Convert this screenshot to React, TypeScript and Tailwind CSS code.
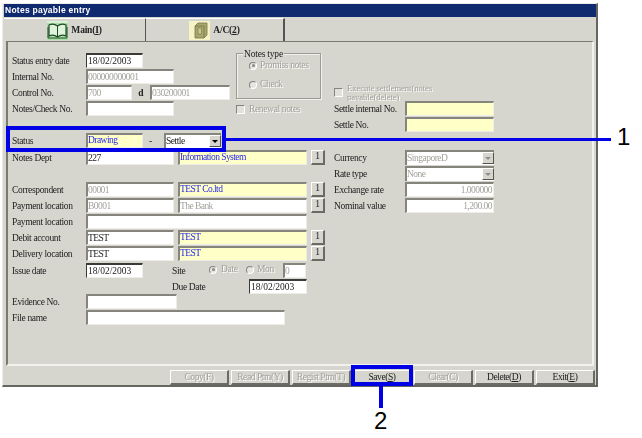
import React from "react";

type FieldKind = "plain" | "yellow" | "disabled" | "date";

function Field({ w, text = "", kind = "plain", blue = false, right = false, ml = "" }: { w: string; text?: string; kind?: FieldKind; blue?: boolean; right?: boolean; ml?: string }) {
  const bg = kind === "yellow" ? "bg-[#ffffc8]" : "bg-white";
  const border = kind === "date" ? "border-t-2 border-l border-[#3a3a36]" : "border-t-2 border-l-2 border-[#85847d]";
  const color = blue ? "text-[#2a2ae8]" : kind === "disabled" ? "text-[#a3a29c]" : "text-[#1c1c1c]";
  const track = kind === "date" ? "pl-px" : "tracking-[-0.55px]";
  const lead = blue ? "leading-[11px]" : "leading-[12px]";
  return (
    <div className={`${w} ${ml} ${bg} ${border} ${color} ${track} ${lead} ${right ? "text-right pr-px" : ""} h-[15px] shrink-0 border-b border-r border-b-[#eeede8] border-r-[#eeede8] overflow-hidden whitespace-nowrap`}>
      {text}
    </div>
  );
}

function Label({ children, w = "w-[74px]", off = false }: { children: React.ReactNode; w?: string; off?: boolean }) {
  return <div className={`${w} shrink-0 leading-[17px] tracking-[-0.35px] whitespace-nowrap ${off ? "text-[#a3a29c] [text-shadow:1px_1px_0_#fff]" : "text-[#222]"}`}>{children}</div>;
}

function Row({ children, h = "h-4" }: { children: React.ReactNode; h?: string }) {
  return <div className={`${h} flex items-start`}>{children}</div>;
}

function Picker() {
  return (
    <div className="w-[14px] h-[15px] ml-1 shrink-0 bg-[#d6d5ce] border-t border-l border-white border-r-2 border-b-2 border-r-[#6b6a64] border-b-[#6b6a64] text-center leading-[11px] text-[#222]">1</div>
  );
}

function Arrow({ off = false }: { off?: boolean }) {
  return (
    <div className="w-[12px] h-[12px] shrink-0 bg-[#d6d5ce] border-t border-l border-white border-r border-b border-r-[#55544f] border-b-[#55544f] flex items-center justify-center">
      <div className={`w-0 h-0 border-l-[3px] border-r-[3px] border-t-[3px] border-l-transparent border-r-transparent ${off ? "border-t-[#8f8e88]" : "border-t-black"}`} />
    </div>
  );
}

function Select({ w, text, off = false }: { w: string; text: string; off?: boolean }) {
  return (
    <div className={`${w} h-[15px] shrink-0 bg-white border-t-2 border-l-2 border-[#85847d] flex justify-between ${off ? "text-[#a3a29c]" : "text-[#1c1c1c]"}`}>
      <span className="tracking-[-0.5px] leading-[12px]">{text}</span>
      <Arrow off={off} />
    </div>
  );
}

function Radio({ on = false }: { on?: boolean }) {
  return (
    <div className="w-2 h-2 rounded-full bg-[#e6e5e0] border border-[#85847d] border-b-white border-r-white flex items-center justify-center shrink-0">
      {on && <div className="w-[3px] h-[3px] rounded-full bg-[#8a8983]" />}
    </div>
  );
}

function Check() {
  return <div className="w-[9px] h-[9px] shrink-0 bg-[#e2e1dc] border border-[#85847d] border-b-white border-r-white" />;
}

function Btn({ children, off = false }: { children: React.ReactNode; off?: boolean }) {
  return (
    <div className={`w-[59px] h-[15px] bg-[#d6d5ce] border-t border-l border-white border-r-2 border-b-2 border-r-[#6b6a64] border-b-[#6b6a64] text-center leading-[12px] tracking-[-0.45px] whitespace-nowrap ${off ? "text-[#a3a29c] [text-shadow:1px_1px_0_#fff]" : "text-[#1c1c1c]"}`}>
      {children}
    </div>
  );
}

function BookIcon() {
  return (
    <svg width="21" height="19" viewBox="0 0 21 19" className="shrink-0">
      <rect width="21" height="19" fill="#a9dfa6" />
      <rect x="0" y="0" width="21" height="2" fill="#d8f0d4" />
      <path d="M2 4 C5 2.5 8 3 10.5 5 C13 3 16 2.5 19 4 V15 C16 13.5 13 14 10.5 16 C8 14 5 13.5 2 15 Z" fill="#dff3da" stroke="#1f4a26" strokeWidth="1.2" />
      <path d="M10.5 5 V16" stroke="#1f4a26" strokeWidth="1" />
      <path d="M1 6 V17 H20 V6" fill="none" stroke="#1f4a26" strokeWidth="1" />
    </svg>
  );
}

function BinderIcon() {
  return (
    <svg width="21" height="19" viewBox="0 0 21 19" className="shrink-0">
      <rect width="21" height="19" fill="#f6f3c4" />
      <path d="M6 5 L9 2 H18 V14 L15 17 H6 Z" fill="#a8a66e" stroke="#77754a" strokeWidth="0.8" />
      <path d="M6 5 H15 V17" fill="none" stroke="#77754a" strokeWidth="0.8" />
      <rect x="9" y="7" width="3.5" height="6" fill="#c9c78e" stroke="#77754a" strokeWidth="0.6" />
    </svg>
  );
}

export default function App() {
  return (
    <div className="relative w-[642px] h-[438px] bg-white overflow-hidden font-['Liberation_Serif',serif] text-[9.5px]">
      <div className="ml-[2px] mt-[3px] w-[596px] h-[384px] flex flex-col bg-[#d6d5ce] blur-[0.3px] border-t border-l border-[#eeede8] border-r-2 border-b-2 border-r-[#66655f] border-b-[#66655f]">
        <div className="h-[13px] ml-px bg-[#102a70] text-white font-bold font-['Liberation_Sans',sans-serif] text-[8.5px] tracking-[0.25px] leading-[13px] pl-[1px] shrink-0">Notes payable entry</div>

        <div className="h-[24px] ml-px flex shrink-0 pt-px">
          <div className="w-[142px] border-t border-white border-r border-r-[#555] flex items-center justify-center gap-[3px] font-bold text-[9.5px] tracking-[-0.2px] text-[#222]">
            <BookIcon />
            <span>Main(<u>I</u>)</span>
          </div>
          <div className="w-[139px] border-t border-white border-r-2 border-r-[#555] flex items-center justify-center gap-[3px] font-bold text-[9.5px] tracking-[-0.2px] text-[#222]">
            <BinderIcon />
            <span>A/C(<u>2</u>)</span>
          </div>
        </div>

        <div className="h-[325px] ml-[3px] mr-[2px] flex shrink-0 pl-[4px] pt-[11px] border-t border-l-2 border-[#7a7972] border-r-2 border-b-2 border-r-[#f2f1ec] border-b-[#f2f1ec]">
          <div className="w-[322px] shrink-0">
            <div className="flex h-[80px]">
              <div className="w-[224px] shrink-0">
                <Row><Label>Status entry date</Label><Field w="w-[57px]" text="18/02/2003" kind="date" /></Row>
                <Row><Label>Internal No.</Label><Field w="w-[88px]" text="000000000001" kind="disabled" /></Row>
                <Row>
                  <Label>Control No.</Label>
                  <Field w="w-[46px]" text="700" kind="disabled" />
                  <div className="w-[18px] text-center leading-[16px] font-bold text-[#222] shrink-0">d</div>
                  <Field w="w-[80px]" text="030200001" kind="disabled" />
                </Row>
                <Row><Label>Notes/Check No.</Label><Field w="w-[88px]" /></Row>
              </div>
              <div className="w-[85px] shrink-0">
                <div className="relative h-[46px] border border-[#9c9b95] shadow-[1px_1px_0_#f2f1ec,inset_1px_1px_0_#f2f1ec] pl-3 pt-[4px]">
                  <div className="absolute left-[6px] -top-[5px] px-px bg-[#d6d5ce] leading-[10px] tracking-[-0.2px] text-[#222]">Notes type</div>
                  <div className="flex items-center gap-[3px] h-[15px]"><Radio on /><Label w="w-auto" off>Promiss notes</Label></div>
                  <div className="flex items-center gap-[3px] h-[15px] mt-[4px]"><Radio /><Label w="w-auto" off>Check</Label></div>
                </div>
                <div className="flex items-center gap-1 h-[15px] mt-[3px]"><Check /><Label w="w-auto" off>Renewal notes</Label></div>
              </div>
            </div>

            <Row h="h-[17px]">
              <Label>Status</Label>
              <Field w="w-[57px]" text="Drawing" kind="yellow" blue />
              <div className="w-[21px] pl-[6px] leading-[17px] text-[#222] shrink-0">-</div>
              <Select w="w-[57px]" text="Settle" />
            </Row>
            <Row>
              <Label>Notes Dept</Label>
              <Field w="w-[88px]" text="227" />
              <Field w="w-[129px]" ml="ml-1" text="Information System" kind="yellow" blue />
              <Picker />
            </Row>
            <Row><span /></Row>
            <Row>
              <Label>Correspondent</Label>
              <Field w="w-[88px]" text="00001" kind="disabled" />
              <Field w="w-[129px]" ml="ml-1" text="TEST Co.ltd" kind="yellow" blue />
              <Picker />
            </Row>
            <Row>
              <Label>Payment location</Label>
              <Field w="w-[88px]" text="B0001" kind="disabled" />
              <Field w="w-[129px]" ml="ml-1" text="The Bank" kind="disabled" />
              <Picker />
            </Row>
            <Row><Label>Payment location</Label><Field w="w-[221px]" /></Row>
            <Row>
              <Label>Debit account</Label>
              <Field w="w-[88px]" text="TEST" />
              <Field w="w-[129px]" ml="ml-1" text="TEST" kind="yellow" blue />
              <Picker />
            </Row>
            <Row h="h-[17px]">
              <Label>Delivery location</Label>
              <Field w="w-[88px]" text="TEST" />
              <Field w="w-[129px]" ml="ml-1" text="TEST" kind="yellow" blue />
              <Picker />
            </Row>
            <Row>
              <Label>Issue date</Label>
              <Field w="w-[57px]" text="18/02/2003" kind="date" />
              <Label w="w-[37px] ml-[29px]">Site</Label>
              <div className="flex items-center gap-1 h-[13px] w-[37px] shrink-0"><Radio on /><Label w="w-auto" off>Date</Label></div>
              <div className="flex items-center gap-[3px] h-[13px] w-[37px] shrink-0"><Radio /><Label w="w-auto" off>Mon</Label></div>
              <Field w="w-[23px]" text="0" kind="disabled" />
            </Row>
            <Row h="h-[15px]">
              <Label w="w-[77px] ml-[160px]">Due Date</Label>
              <Field w="w-[58px]" text="18/02/2003" kind="date" />
            </Row>
            <Row><Label>Evidence No.</Label><Field w="w-[91px]" /></Row>
            <Row><Label>File name</Label><Field w="w-[199px]" /></Row>
          </div>

          <div className="flex-1 pt-[31px]">
            <div className="flex h-[17px] gap-1 overflow-hidden">
              <div className="pt-1"><Check /></div>
              <div className="leading-[9px] text-[#a3a29c] [text-shadow:1px_1px_0_#fff] whitespace-nowrap text-[8.5px]">Execute settlement(notes<br />payable(delete)</div>
            </div>
            <Row><Label w="w-[71px]">Settle internal No.</Label><Field w="w-[89px]" kind="yellow" /></Row>
            <Row h="h-[33px]"><Label w="w-[71px]">Settle No.</Label><Field w="w-[89px]" kind="yellow" /></Row>
            <Row><Label w="w-[71px]">Currency</Label><Select w="w-[89px]" text="SingaporeD" off /></Row>
            <Row><Label w="w-[71px]">Rate type</Label><Select w="w-[89px]" text="None" off /></Row>
            <Row><Label w="w-[71px]">Exchange rate</Label><Field w="w-[89px]" text="1.000000" kind="disabled" right /></Row>
            <Row><Label w="w-[71px]">Nominal value</Label><Field w="w-[89px]" text="1,200.00" kind="disabled" right /></Row>
          </div>
        </div>

        <div className="flex justify-end gap-[2px] pt-[4px] pr-px">
          <Btn off>Copy(F)</Btn>
          <Btn off>Read Ptrn(Y)</Btn>
          <Btn off>Regist Ptrn(T)</Btn>
          <Btn><span>Save(<u>S</u>)</span></Btn>
          <Btn off>Clear(C)</Btn>
          <Btn><span>Delete(<u>D</u>)</span></Btn>
          <Btn><span>Exit(<u>E</u>)</span></Btn>
        </div>
      </div>

      {/* Callouts laid over the screenshot */}
      <div className="absolute left-[6px] top-[126px] w-[220px] h-[26px] border-[4px] border-[#0000e6]" />
      <div className="absolute left-[226px] top-[138px] w-[385px] h-[3px] bg-[#0000e6]" />
      <div className="absolute left-[617px] top-[123px] font-['Liberation_Sans',sans-serif] text-[24px] leading-[28px] text-black">1</div>
      <div className="absolute left-[351px] top-[365px] w-[62px] h-[21px] border-[4px] border-[#0000e6]" />
      <div className="absolute left-[379px] top-[386px] w-1 h-[22px] bg-[#0000e6]" />
      <div className="absolute left-[374px] top-[407px] font-['Liberation_Sans',sans-serif] text-[24px] leading-[28px] text-black">2</div>
    </div>
  );
}
